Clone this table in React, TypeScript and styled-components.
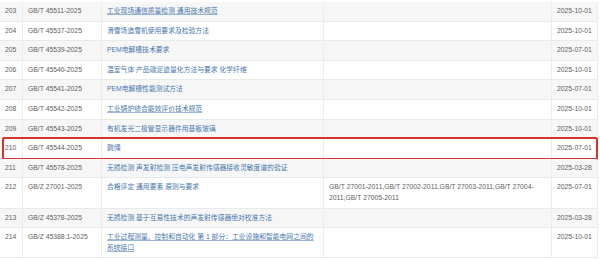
import styled, { createGlobalStyle } from 'styled-components'

const GlobalStyle = createGlobalStyle`
  html, body {
    margin: 0;
    padding: 0;
    background: #ffffff;
  }
  body {
    font-family: 'Liberation Sans', 'Noto Sans CJK SC', sans-serif;
  }
`

type Standard = {
  no: number
  code: string
  title: string
  replaces?: string
  date: string
  underline?: boolean
  marked?: boolean
}

const rows: Standard[] = [
  { no: 203, code: 'GB/T 45511-2025', title: '工业现场通信质量检测 通用技术规范', date: '2025-10-01', underline: true },
  { no: 204, code: 'GB/T 45537-2025', title: '滑雪场造雪机使用要求及检验方法', date: '2025-10-01' },
  { no: 205, code: 'GB/T 45539-2025', title: 'PEM电解槽技术要求', date: '2025-07-01' },
  { no: 206, code: 'GB/T 45540-2025', title: '温室气体 产品碳足迹量化方法与要求 化学纤维', date: '2025-10-01' },
  { no: 207, code: 'GB/T 45541-2025', title: 'PEM电解槽性能测试方法', date: '2025-07-01' },
  { no: 208, code: 'GB/T 45542-2025', title: '工业锅炉综合能效评价技术规范', date: '2025-10-01', underline: true },
  { no: 209, code: 'GB/T 45543-2025', title: '有机发光二极管显示器件用基板玻璃', date: '2025-10-01' },
  { no: 210, code: 'GB/T 45544-2025', title: '跳绳', date: '2025-07-01', marked: true },
  { no: 211, code: 'GB/T 45578-2025', title: '无损检测 声发射检测 压电声发射传感器接收灵敏度谱的验证', date: '2025-03-28' },
  {
    no: 212,
    code: 'GB/Z 27001-2025',
    title: '合格评定 通用要素 原则与要求',
    replaces: 'GB/T 27001-2011,GB/T 27002-2011,GB/T 27003-2011,GB/T 27004-2011,GB/T 27005-2011',
    date: '2025-07-01',
  },
  { no: 213, code: 'GB/Z 45378-2025', title: '无损检测 基于互易性技术的声发射传感器绝对校准方法', date: '2025-03-28' },
  {
    no: 214,
    code: 'GB/Z 45388.1-2025',
    title: '工业过程测量、控制和自动化 第 1 部分：工业设施和智能电网之间的系统接口',
    date: '2025-10-01',
    underline: true,
  },
]

const App = () => {
  return (
    <>
      <GlobalStyle />
      <Page>
        <Table>
          {rows.map((r, i) => (
            <Row key={r.no} $striped={i % 2 === 0} $marked={r.marked}>
              <Cell>{r.no}</Cell>
              <Cell>{r.code}</Cell>
              <Cell>
                <TitleLink $underline={r.underline}>{r.title}</TitleLink>
              </Cell>
              <Cell>{r.replaces}</Cell>
              <Cell>{r.date}</Cell>
            </Row>
          ))}
        </Table>
      </Page>
    </>
  )
}

const Page = styled.main`
  width: 600px;
  height: 259px;
  overflow: hidden;
  background: #ffffff;
  padding-top: 2px;
  box-sizing: border-box;
`

const Table = styled.div`
  width: 597px;
  display: flex;
  flex-direction: column;
  border-right: 1px solid #ececec;
`

const Row = styled.div<{ $striped: boolean; $marked?: boolean }>`
  position: relative;
  display: grid;
  grid-template-columns: 23px 79px 222px 228px 45px;
  background: ${p => (p.$striped ? '#f6f6f6' : '#ffffff')};
  border-bottom: 1px solid #e9e9e9;

  ${p =>
    p.$marked &&
    `
    &::after {
      content: '';
      position: absolute;
      top: -2px;
      bottom: -2px;
      left: 2px;
      right: -1px;
      border: 2px solid #d8332b;
      border-radius: 2px;
      pointer-events: none;
    }
  `}
`

const Cell = styled.div`
  padding: 4px 4px 4px 5px;
  font-size: 6.8px;
  line-height: 10.6px;
  color: #5e5e5e;
  border-right: 1px solid #ececec;
  overflow-wrap: break-word;

  &:last-child {
    border-right: none;
  }
`

const TitleLink = styled.a<{ $underline?: boolean }>`
  color: #4876ad;
  text-decoration: ${p => (p.$underline ? 'underline' : 'none')};
  text-decoration-color: #9ab7d8;
  cursor: pointer;
`

export default App
